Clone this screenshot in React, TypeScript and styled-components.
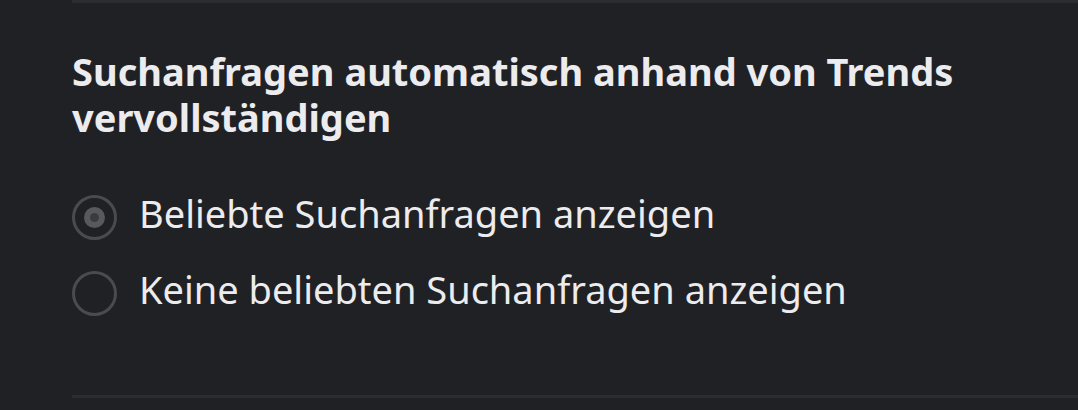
import React, { useState } from "react";
import styled, { createGlobalStyle } from "styled-components";

const GlobalStyle = createGlobalStyle`
  html, body {
    margin: 0;
    padding: 0;
    background: #202125;
  }
  body {
    font-family: "Noto Sans", Lato, sans-serif;
    color: #ececef;
  }
`;

const Page = styled.div`
  width: 1078px;
  height: 410px;
  overflow: hidden;
  background: #202125;
  padding-left: 72px;
  box-sizing: border-box;
`;

const Divider = styled.div<{ mt?: number }>`
  height: 3px;
  margin-top: ${(p) => p.mt || 0}px;
  background: #2c2d31;
`;

const Section = styled.section`
  padding-top: 45px;
`;

const Title = styled.h2`
  margin: 0;
  font-size: 38px;
  font-weight: 700;
  line-height: 46px;
  color: #ececef;
`;

const Options = styled.div`
  display: flex;
  flex-direction: column;
  gap: 31px;
  margin-top: 55px;
`;

const Option = styled.label`
  display: flex;
  align-items: flex-start;
  gap: 22px;
  cursor: pointer;
`;

const Radio = styled.span<{ checked: boolean }>`
  width: 45px;
  height: 45px;
  flex-shrink: 0;
  box-sizing: border-box;
  border-radius: 50%;
  border: 3px solid #4a4b4f;
  display: flex;
  align-items: center;
  justify-content: center;

  &::after {
    content: "";
    display: ${(p) => (p.checked ? "block" : "none")};
    width: 21px;
    height: 21px;
    box-sizing: border-box;
    border-radius: 50%;
    background: #3a3b3f;
    border: 6px solid #58595d;
  }
`;

const Label = styled.span`
  font-size: 38px;
  font-weight: 400;
  line-height: 45px;
  margin-top: -4px;
  color: #ececef;
`;

const items = [
  "Beliebte Suchanfragen anzeigen",
  "Keine beliebten Suchanfragen anzeigen",
];

const App = () => {
  const [selected, setSelected] = useState(0);
  return (
    <>
      <GlobalStyle />
      <Page>
        <Divider />
        <Section>
          <Title>
            Suchanfragen automatisch anhand von Trends
            <br />
            vervollständigen
          </Title>
          <Options>
            {items.map((text, i) => (
              <Option key={i} onClick={() => setSelected(i)}>
                <Radio checked={selected === i} />
                <Label>{text}</Label>
              </Option>
            ))}
          </Options>
        </Section>
        <Divider mt={79} />
      </Page>
    </>
  );
};

export default App;
